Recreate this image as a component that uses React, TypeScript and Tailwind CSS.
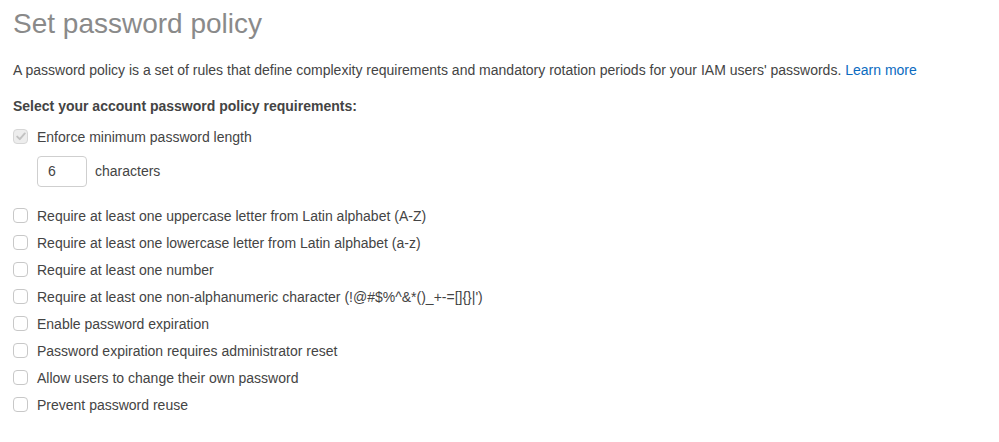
const rules = [
  "Require at least one uppercase letter from Latin alphabet (A-Z)",
  "Require at least one lowercase letter from Latin alphabet (a-z)",
  "Require at least one number",
  "Require at least one non-alphanumeric character (!@#$%^&*()_+-=[]{}|')",
  "Enable password expiration",
  "Password expiration requires administrator reset",
  "Allow users to change their own password",
  "Prevent password reuse",
];

function Box({ checked = false }: { checked?: boolean }) {
  if (checked) {
    return (
      <span className="mt-[2px] flex h-[15px] w-[15px] shrink-0 items-center justify-center rounded-[4px] border border-[#d6d6d6] bg-[#ededed]">
        <svg width="10" height="9" viewBox="0 0 10 9" fill="none">
          <path d="M1.2 4.6 L3.8 7.2 L8.8 1.4" stroke="#c2c2c2" strokeWidth="1.9" strokeLinecap="round" strokeLinejoin="round" />
        </svg>
      </span>
    );
  }
  return <span className="mt-[2px] block h-[15px] w-[15px] shrink-0 rounded-[4px] border border-[#c8c8c8] bg-white" />;
}

export default function App() {
  return (
    <div className="min-h-[442px] bg-white pl-[13px] pt-[8px] font-['Liberation_Sans',Arial,sans-serif] text-[14px] text-[#444]">
      <h1 className="text-[28px] font-normal leading-[32px] text-[#8a8a8a]">Set password policy</h1>

      <p className="mt-[20px] leading-[20px]">
        A password policy is a set of rules that define complexity requirements and mandatory rotation periods for your IAM users' passwords.{" "}
        <a href="#" className="text-[#0b6bbf]">Learn more</a>
      </p>

      <p className="mt-[16px] font-bold leading-[20px]">Select your account password policy requirements:</p>

      <label className="mt-[11px] flex items-start gap-[9px] leading-[20px]">
        <Box checked />
        <span>Enforce minimum password length</span>
      </label>

      <div className="ml-[24px] mt-[9px] flex items-center gap-[8px]">
        <div className="flex h-[31px] w-[50px] items-center rounded-[4px] border border-[#cfcfcf] pl-[10px]">6</div>
        <span>characters</span>
      </div>

      <div className="mt-[19px] flex flex-col gap-[7px]">
        {rules.map((rule) => (
          <label key={rule} className="flex items-start gap-[9px] leading-[20px]">
            <Box />
            <span>{rule}</span>
          </label>
        ))}
      </div>
    </div>
  );
}
